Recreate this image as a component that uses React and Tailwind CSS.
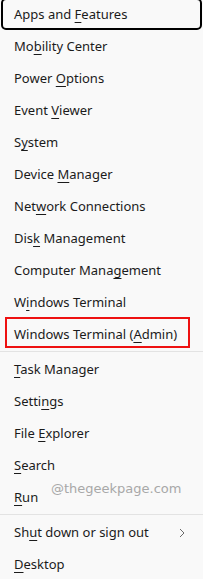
import React from "react";

const U = ({ children }) => (
  <span className="underline decoration-1 underline-offset-[3px]">{children}</span>
);

const Item = ({ children, focused, boxed, chevron }) => (
  <div
    className={
      "relative mx-px flex h-8 items-center rounded-[5px] border-2 pl-[11px] pt-[2px] " +
      (focused ? "border-black" : "border-transparent")
    }
  >
    <span className="whitespace-nowrap">{children}</span>
    {chevron && (
      <svg
        className="absolute left-[175px] top-[10px]"
        width="8"
        height="10"
        viewBox="0 0 8 10"
        fill="none"
      >
        <path d="M2 1l4 4-4 4" stroke="#6b6b6b" strokeWidth="1" />
      </svg>
    )}
    {boxed && (
      <div className="pointer-events-none absolute left-[2px] top-[-3px] h-[31px] w-[185px] border-2 border-[#ee1111]" />
    )}
  </div>
);

const Sep = () => <div className="my-px h-px bg-[#e3e3e3]" />;

export default function App() {
  return (
    <div className="relative h-[579px] w-[203px] overflow-hidden bg-[#f9f9f9] font-['Segoe_UI','Noto_Sans',sans-serif] text-[13px] text-[#1b1b1b]">
      <div className="-mt-[2px] flex flex-col">
        <Item focused>
          Apps and <U>F</U>eatures
        </Item>
        <Item>
          Mo<U>b</U>ility Center
        </Item>
        <Item>
          Power <U>O</U>ptions
        </Item>
        <Item>
          Event <U>V</U>iewer
        </Item>
        <Item>
          S<U>y</U>stem
        </Item>
        <Item>
          Device <U>M</U>anager
        </Item>
        <Item>
          Net<U>w</U>ork Connections
        </Item>
        <Item>
          Dis<U>k</U> Management
        </Item>
        <Item>
          Computer Mana<U>g</U>ement
        </Item>
        <Item>
          W<U>i</U>ndows Terminal
        </Item>
        <Item boxed>
          Windows Terminal (<U>A</U>dmin)
        </Item>
        <Sep />
        <Item>
          <U>T</U>ask Manager
        </Item>
        <Item>
          Setti<U>n</U>gs
        </Item>
        <Item>
          File <U>E</U>xplorer
        </Item>
        <Item>
          <U>S</U>earch
        </Item>
        <Item>
          <U>R</U>un
        </Item>
        <Sep />
        <Item chevron>
          Sh<U>u</U>t down or sign out
        </Item>
        <Item>
          <U>D</U>esktop
        </Item>
      </div>
      <div className="pointer-events-none absolute left-[51px] top-[479px] font-['DejaVu_Sans',sans-serif] text-[13px] text-[#a8a8a8]">
        @thegeekpage.com
      </div>
    </div>
  );
}
